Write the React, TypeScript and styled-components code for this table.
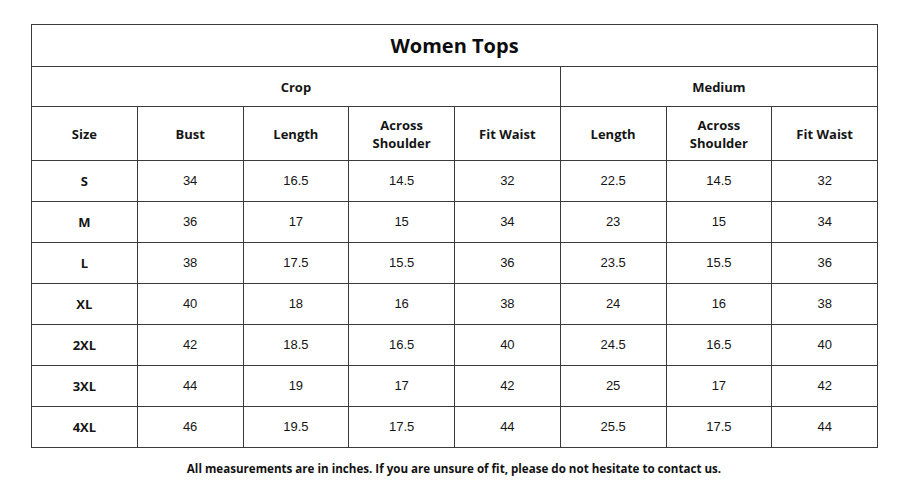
import styled, { createGlobalStyle } from "styled-components";

const GlobalStyle = createGlobalStyle`
  html, body {
    margin: 0;
    padding: 0;
    background: #ffffff;
  }
`;

const Page = styled.div`
  width: 900px;
  height: 500px;
  box-sizing: border-box;
  padding: 24px 23px 0 31px;
  font-family: "Open Sans", "Liberation Sans", sans-serif;
  color: #111;
`;

const Table = styled.table`
  width: 846px;
  border-collapse: collapse;
  table-layout: fixed;
`;

const Cell = styled.td<{ $h?: number; $bold?: boolean }>`
  border: 1px solid #3a3a3a;
  height: ${(p) => p.$h ?? 40}px;
  padding: 0;
  text-align: center;
  vertical-align: middle;
  white-space: nowrap;
  font-family: ${(p) =>
    p.$bold ? '"Open Sans", sans-serif' : '"Liberation Sans", sans-serif'};
  font-weight: ${(p) => (p.$bold ? 700 : 400)};
  font-size: 13px;
  line-height: 18px;
  color: #151515;
  box-sizing: border-box;
`;

const Title = styled(Cell)`
  font-size: 20px;
  font-family: "Open Sans", sans-serif;
  font-weight: 700;
  color: #0d0d0d;
`;

const Note = styled.p`
  margin: 13px 0 0 0;
  width: 846px;
  text-align: center;
  font-family: "Open Sans", sans-serif;
  font-weight: 700;
  font-size: 11.6px;
  color: #111;
`;

const rows = [
  ["S", "34", "16.5", "14.5", "32", "22.5", "14.5", "32"],
  ["M", "36", "17", "15", "34", "23", "15", "34"],
  ["L", "38", "17.5", "15.5", "36", "23.5", "15.5", "36"],
  ["XL", "40", "18", "16", "38", "24", "16", "38"],
  ["2XL", "42", "18.5", "16.5", "40", "24.5", "16.5", "40"],
  ["3XL", "44", "19", "17", "42", "25", "17", "42"],
  ["4XL", "46", "19.5", "17.5", "44", "25.5", "17.5", "44"],
];

const heads = [
  "Size",
  "Bust",
  "Length",
  "Across|Shoulder",
  "Fit Waist",
  "Length",
  "Across|Shoulder",
  "Fit Waist",
];

export default function App() {
  return (
    <Page>
      <GlobalStyle />
      <Table>
        <colgroup>
          {heads.map((_, i) => (
            <col key={i} style={{ width: "105.75px" }} />
          ))}
        </colgroup>
        <tbody>
          <tr>
            <Title colSpan={8} $h={42}>
              Women Tops
            </Title>
          </tr>
          <tr>
            <Cell colSpan={5} $h={40} $bold>
              Crop
            </Cell>
            <Cell colSpan={3} $h={40} $bold>
              Medium
            </Cell>
          </tr>
          <tr>
            {heads.map((h, i) => (
              <Cell key={i} $h={54} $bold>
                {h.includes("|") ? (
                  <>
                    {h.split("|")[0]}
                    <br />
                    {h.split("|")[1]}
                  </>
                ) : (
                  h
                )}
              </Cell>
            ))}
          </tr>
          {rows.map((r) => (
            <tr key={r[0]}>
              {r.map((v, i) => (
                <Cell key={i} $h={41} $bold={i === 0}>
                  {v}
                </Cell>
              ))}
            </tr>
          ))}
        </tbody>
      </Table>
      <Note>
        All measurements are in inches. If you are unsure of fit, please do
        not hesitate to contact us.
      </Note>
    </Page>
  );
}
